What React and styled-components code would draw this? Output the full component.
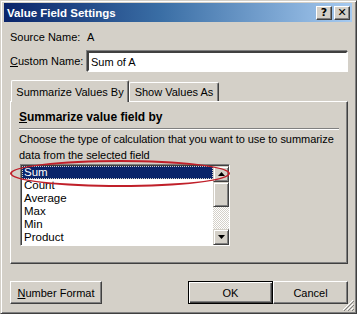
import React from "react";
import styled, { createGlobalStyle } from "styled-components";

const GlobalStyle = createGlobalStyle`
  html, body { margin: 0; padding: 0; background: #d4d0c8; }
  body { font-family: "Liberation Sans", Arial, sans-serif; font-size: 11px; color: #000; }
`;

const Window = styled.div`
  width: 357px;
  height: 314px;
  box-sizing: border-box;
  background: #d4d0c8;
  border: 1px solid #d4d0c8;
  border-right-color: #404040;
  border-bottom-color: #404040;
  box-shadow: inset 1px 1px 0 #fff, inset -1px -1px 0 #808080;
  padding: 2px 4px 3px 3px;
  display: flex;
  flex-direction: column;
  position: relative;
`;

const TitleBar = styled.div`
  height: 19px;
  display: flex;
  align-items: center;
  justify-content: space-between;
  padding: 0 2px 0 3px;
  background: linear-gradient(to right, #0a246a, #3a6ea5 45%, #a6caf0);
`;

const Title = styled.span`
  color: #fff;
  font-weight: bold;
  font-size: 11.5px;
`;

const TitleButtons = styled.div`
  display: flex;
  gap: 2px;
`;

const CaptionButton = styled.div`
  width: 16px;
  height: 14px;
  box-sizing: border-box;
  background: #d4d0c8;
  border: 1px solid;
  border-color: #fff #404040 #404040 #fff;
  box-shadow: inset -1px -1px 0 #808080;
  display: flex;
  align-items: center;
  justify-content: center;
  font-weight: bold;
  font-size: 11px;
  line-height: 1;
  font-family: "DejaVu Sans", sans-serif;
`;

const Body = styled.div`
  flex: 1;
  display: flex;
  flex-direction: column;
  padding: 0 4px 0 6px;
`;

const Row = styled.div`
  display: flex;
  align-items: center;
  height: ${(p) => p.$h}px;
  margin-top: ${(p) => p.$mt || 0}px;
`;

const Label = styled.span`
  width: 77px;
`;

const TextBox = styled.div`
  flex: 1;
  height: 21px;
  box-sizing: border-box;
  background: #fff;
  border: 2px solid;
  border-color: #404040 #fff #fff #404040;
  box-shadow: -1px -1px 0 #808080;
  padding: 3px 2px;
`;

const Tabs = styled.div`
  display: flex;
  align-items: flex-end;
  margin-top: 6px;
  height: 22px;
  padding-left: 1px;
`;

const Tab = styled.div`
  box-sizing: border-box;
  height: ${(p) => (p.$active ? 22 : 19)}px;
  display: flex;
  align-items: center;
  justify-content: center;
  white-space: nowrap;
  border: 1px solid #fff;
  border-right: 1px solid #404040;
  border-bottom: none;
  border-radius: 2px 2px 0 0;
  box-shadow: inset -1px 0 0 #808080;
  background: #d4d0c8;
  margin-bottom: ${(p) => (p.$active ? -1 : 0)}px;
  z-index: ${(p) => (p.$active ? 1 : 0)};
  width: ${(p) => p.$w}px;
`;

const Panel = styled.div`
  box-sizing: border-box;
  height: 163px;
  border: 1px solid;
  border-color: #fff #404040 #404040 #fff;
  box-shadow: inset -1px -1px 0 #808080;
  padding: 8px 8px 0 8px;
  display: flex;
  flex-direction: column;
`;

const Heading = styled.div`
  font-weight: bold;
  font-size: 12px;
  height: 16px;
  padding-bottom: 2px;
  border-bottom: 1px solid #808080;
  box-shadow: 0 1px 0 #fff;
  u { text-decoration: underline; }
`;

const Description = styled.p`
  margin: 2px 0 0 0;
  line-height: 16px;
  letter-spacing: -0.05px;
`;

const ListArea = styled.div`
  position: relative;
  margin-top: 1px;
  margin-left: 1px;
  width: 210px;
`;

const ListBox = styled.div`
  box-sizing: border-box;
  height: 82px;
  display: flex;
  background: #fff;
  border: 1px solid;
  border-color: #808080 #fff #fff #808080;
  box-shadow: inset 1px 1px 0 #404040;
  padding: 1px 0 0 1px;
`;

const Items = styled.div`
  flex: 1;
  overflow: hidden;
`;

const Item = styled.div`
  height: 13px;
  line-height: 13px;
  padding-left: 2px;
  font-size: 11.5px;
  background: ${(p) => (p.$selected ? "#0a246a" : "transparent")};
  color: ${(p) => (p.$selected ? "#fff" : "#000")};
  outline: ${(p) => (p.$selected ? "1px dotted #d4d0c8" : "none")};
  outline-offset: -1px;
`;

const ScrollBar = styled.div`
  width: 16px;
  display: flex;
  flex-direction: column;
  background-color: #eae8e4;
  background-image: repeating-conic-gradient(#d4d0c8 0 25%, #fff 0 50%);
  background-size: 2px 2px;
`;

const ScrollButton = styled.div`
  width: 16px;
  height: ${(p) => p.$h || 16}px;
  box-sizing: border-box;
  background: #d4d0c8;
  border: 1px solid;
  border-color: #d4d0c8 #404040 #404040 #d4d0c8;
  box-shadow: inset 1px 1px 0 #fff, inset -1px -1px 0 #808080;
  display: flex;
  align-items: center;
  justify-content: center;
`;

const Track = styled.div`
  flex: 1;
`;

const Ellipse = styled.div`
  position: absolute;
  left: -10px;
  top: -4px;
  width: 220px;
  height: 27px;
  border: 2px solid #c0202a;
  border-radius: 50%;
  box-sizing: border-box;
  pointer-events: none;
`;

const Footer = styled.div`
  display: flex;
  align-items: center;
  margin-top: 17px;
`;

const Button = styled.div`
  box-sizing: border-box;
  width: ${(p) => p.$w}px;
  height: 23px;
  display: flex;
  align-items: center;
  justify-content: center;
  background: #d4d0c8;
  border: 1px solid;
  border-color: ${(p) => (p.$default ? "#000" : "#fff #404040 #404040 #fff")};
  box-shadow: ${(p) =>
    p.$default
      ? "inset 1px 1px 0 #fff, inset -1px -1px 0 #404040, inset -2px -2px 0 #808080"
      : "inset -1px -1px 0 #808080"};
  margin-left: ${(p) => p.$ml || 0}px;
  u { text-decoration: underline; }
`;

const Grip = styled.svg`
  position: absolute;
  right: 2px;
  bottom: 2px;
`;

const Arrow = ({ down }) => (
  <svg width="7" height="4" viewBox="0 0 7 4">
    <path d={down ? "M0 0h7L3.5 4z" : "M0 4h7L3.5 0z"} fill="#000" />
  </svg>
);

const items = ["Sum", "Count", "Average", "Max", "Min", "Product"];

export default function App() {
  return (
    <>
      <GlobalStyle />
      <Window>
        <TitleBar>
          <Title>Value Field Settings</Title>
          <TitleButtons>
            <CaptionButton>?</CaptionButton>
            <CaptionButton>✕</CaptionButton>
          </TitleButtons>
        </TitleBar>
        <Body>
          <Row $h={24} $mt={3}>
            <Label>Source Name:</Label>
            <span>A</span>
          </Row>
          <Row $h={24}>
            <Label>
              <u>C</u>ustom Name:
            </Label>
            <TextBox>Sum of A</TextBox>
          </Row>
          <Tabs>
            <Tab $active $w={118}>Summarize Values By</Tab>
            <Tab $w={90}>Show Values As</Tab>
          </Tabs>
          <Panel>
            <Heading>
              <u>S</u>ummarize value field by
            </Heading>
            <Description>
              Choose the type of calculation that you want to use to summarize
              data from the selected field
            </Description>
            <ListArea>
              <ListBox>
                <Items>
                  {items.map((it, i) => (
                    <Item key={it} $selected={i === 0}>
                      {it}
                    </Item>
                  ))}
                </Items>
                <ScrollBar>
                  <ScrollButton>
                    <Arrow />
                  </ScrollButton>
                  <ScrollButton $h={25} />
                  <Track />
                  <ScrollButton>
                    <Arrow down />
                  </ScrollButton>
                </ScrollBar>
              </ListBox>
              <Ellipse />
            </ListArea>
          </Panel>
          <Footer>
            <Button $w={92}>
              <u>N</u>umber Format
            </Button>
            <Button $w={85} $ml={86} $default>
              OK
            </Button>
            <Button $w={75}>Cancel</Button>
          </Footer>
        </Body>
        <Grip width="12" height="12" viewBox="0 0 12 12">
          <path d="M11 1L1 11M11 5L5 11M11 9L9 11" stroke="#fff" strokeWidth="1" />
          <path d="M12 2L2 12M12 6L6 12M12 10L10 12" stroke="#808080" strokeWidth="1" />
        </Grip>
      </Window>
    </>
  );
}
